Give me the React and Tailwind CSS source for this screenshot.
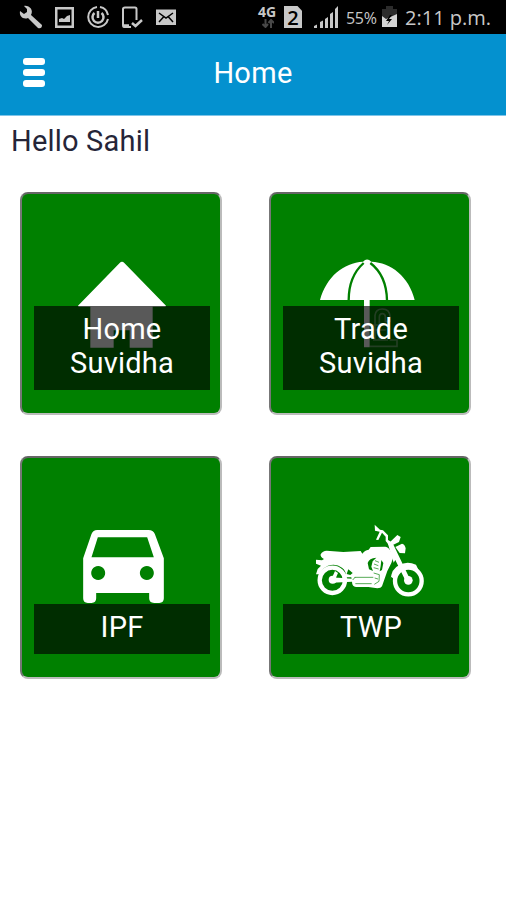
import React from "react";

function HouseIcon() {
  return (
    <svg className="block w-[88px] h-[87px] ml-[1px]" viewBox="203 64 264 261" fill="white">
      <path d="M328 70Q335 62 342 70L467 198Q467 201 464 201H427V324H358V272H310V324H240V201H206Q203 201 203 198Z" />
    </svg>
  );
}

function UmbrellaIcon() {
  return (
    <svg className="block w-[95px] h-[90px] -ml-[5px]" viewBox="181 57 285 270" fill="white">
      <path d="M181 180C200 110 252 68 310 65Q322 52 335 65C394 67 448 110 465 180H330V322H313V180Z" />
      <path d="M312 69C286 92 267 130 267 181M332 69C362 92 381 130 382 181" fill="none" stroke="#008000" strokeWidth="7" />
      <g fill="none" stroke="white" strokeOpacity=".4" strokeWidth="5">
        <path d="M330 319H412V300H390M346 300V226Q348 207 368 207Q390 207 391 230V244H377V230Q376 221 368 221Q359 221 359 232V300M340 255H378M340 270H378M340 300H385" />
      </g>
    </svg>
  );
}

function CarIcon() {
  return (
    <svg className="block w-[81px] h-[73px] ml-[4px]" viewBox="220 239 242 219" fill="white">
      <path
        fillRule="evenodd"
        d="M262 239H416Q430 239 435 251L462 324V444Q462 458 448 458H433Q418 458 418 444V428H259V444Q259 458 245 458H234Q220 458 220 444V324L245 251Q250 239 262 239ZM264 261L245 321H432L412 261ZM265 347a21 21 0 1 0 .1 0ZM411 347a21 21 0 1 0 .1 0Z"
      />
    </svg>
  );
}

function BikeIcon() {
  return (
    <svg className="block w-[110px] h-[75px]" viewBox="45 40 330 225" fill="white">
      {/* wheels */}
      <g fill="none" stroke="white">
        <circle cx="97" cy="212" r="38" strokeWidth="13" />
        <circle cx="325" cy="214" r="40" strokeWidth="13" />
      </g>
      <circle cx="98" cy="210" r="12" />
      <circle cx="325" cy="212" r="13" />
      {/* seat, tank and rear fender */}
      <path d="M62 134Q68 123 80 123L130 127L182 124L187 132Q194 121 206 120L212 112L256 111Q267 113 272 125L282 136L274 160L262 184L246 230Q243 236 232 236L205 232H168Q156 230 156 216L154 203H137Q140 184 126 174Q108 160 84 168Q64 177 60 194H48L53 178L63 168L48 162V150L66 152L72 148Q60 142 62 134Z" />
      {/* engine openings */}
      <g fill="#008000">
        <path d="M203 160Q207 145 229 144L218 155L214 171L219 184L207 179Z" />
        <path d="M145 179L158 190L151 196L140 193Z" />
        <path d="M244 151L250 160L246 181L239 185L242 169Z" />
      </g>
      <g fill="none" stroke="#008000" strokeWidth="2">
        <path d="M164 203H220M166 222H215M158 211L166 202M221 190L238 195L237 215L223 224M225 153L237 158M222 163L235 168M221 174L236 178M224 205L234 208" />
      </g>
      {/* swing arm and hub */}
      <path d="M95 203L156 207V216L96 219ZM94 209L105 184L114 190L104 213Z" />
      {/* fork and front fender */}
      <path d="M263 100L276 96L330 209L318 216L286 151L281 159Z" />
      <path d="M272 211Q274 177 297 167Q320 153 348 165L356 182Q328 169 306 178Q288 188 286 211L273 201Z" />
      {/* handlebar, mirror and lamps */}
      <path d="M224 45L240 60L249 62L264 77V91L279 100L270 110L257 94V81L246 69L235 91L228 90L239 66L225 63Z" />
      <path d="M271 96L292 76L302 82L297 97L280 105ZM286 112L306 102Q315 104 317 116L315 131L299 130Z" />
    </svg>
  );
}

function StatusIcons() {
  return (
    <svg className="block w-[180px] h-[34px]" viewBox="0 0 180 34" fill="#c8c8c8">
      {/* wrench */}
      <path d="M24 6C29 5 34 10 31 15L42 25Q42 29 38 28L28 18C23 20 19 16 20 11L24 14L27 12V9Z" />
      {/* picture */}
      <path fillRule="evenodd" d="M55 7H74V28H55ZM57.5 9.500V25.500H71.500V9.500ZM59 22V19L62 18L64 19L67 16L70 15V22Z" />
      {/* power ring */}
      <g fill="none" stroke="#c8c8c8" strokeWidth="2">
        <path d="M97 7A10 10 0 1 0 108 19M100 7A10 10 0 0 1 108 15" />
        <path strokeWidth="2.500" d="M94.500 13A5.500 5.500 0 1 0 101.500 13M98 11V18" />
      </g>
      {/* device check */}
      <g fill="none" stroke="#c8c8c8" strokeWidth="2">
        <path d="M131 27H124Q123 27 123 25V9Q123 7.500 125 7.500H135Q136.500 7.500 136.500 9V20" />
        <path strokeWidth="2.500" d="M123 25.500H129M132 23L135.500 26L142 20" />
      </g>
      {/* mail */}
      <path d="M156 9.500H176V25H156Z" />
      <path d="M159 13L166 18L173 13M159 22L163.500 17M173 22L168.500 17" fill="none" stroke="black" strokeWidth="1.500" />
    </svg>
  );
}

function StatusBar() {
  return (
    <div className="flex h-[34px] w-full items-start bg-black text-[#c8c8c8]">
      <StatusIcons />
      <div className="ml-[78px] w-[20px] pt-[4px]">
        <div className="font-['Open_Sans',sans-serif] text-[14px] leading-[15px] font-bold">4G</div>
        <svg className="ml-[4px] block w-3 h-[9px]" viewBox="0 0 12 9" fill="none" stroke="#484848" strokeWidth="2">
          <path d="M3.500 0V8M.500 5L3.500 8L6 5M9 9V1M6.500 4L9 1L12 4" />
        </svg>
      </div>
      <div className="ml-[6px] mt-[6px] h-[22px] w-[18px] bg-[#c8c8c8] [clip-path:polygon(0_0,75%_0,100%_22%,100%_100%,0_100%)] text-center font-['Open_Sans',sans-serif] text-[20px] leading-[23px] font-semibold text-black">
        2
      </div>
      <svg className="ml-3 mt-[6px] block w-[25px] h-[23px]" viewBox="0 0 25 23" fill="#c8c8c8">
        <path d="M0 20L3 18.500V22H0ZM6 16L9 14.500V22H6ZM11 13L14 11V22H11ZM16 8L19 6V22H16ZM21 3L24 0V22H21Z" />
      </svg>
      <div className="ml-[7px] mt-[8px] w-[31px] whitespace-nowrap font-['Open_Sans',sans-serif] text-[16px] leading-5 tracking-[-0.3px]">
        55%
      </div>
      <svg className="ml-[5px] mt-[6px] block w-[15px] h-[22px]" viewBox="0 0 15 22">
        <path d="M4 0H11V3H15V13H0V3H4Z" fill="#2c2c2c" />
        <path d="M0 10L4 13L15 8V21H0Z" fill="#d4d4d4" />
        <path d="M8 9L4 15H7L5 19L10 13H7L10 9Z" fill="black" />
      </svg>
      <div className="ml-[8px] mt-[6px] whitespace-nowrap font-['Open_Sans',sans-serif] text-[20px] leading-6">
        2:11 p.m.
      </div>
    </div>
  );
}

function Card({ label, top, children }) {
  return (
    <div
      className={`relative h-[223px] w-[202px] rounded-[8px] border-2 border-t-[#666] border-l-[#777] border-r-[#bbb] border-b-[#bbb] bg-[#008000] flex flex-col items-center ${top}`}
    >
      {children}
      <div className="absolute bottom-[23px] left-[12px] w-[176px] bg-black/65 px-6 pt-[6px] pb-[10px] text-center text-[29px] leading-[34px] tracking-[0.2px] text-white">
        {label}
      </div>
    </div>
  );
}

export default function App() {
  return (
    <div className="h-[900px] w-[506px] overflow-hidden bg-white font-['Roboto',sans-serif]">
      <StatusBar />
      <header className="relative flex h-[82px] items-center justify-center border-b border-[#7fc4e8] bg-[#0491cf] pb-[3px]">
        <button className="absolute left-[23px] top-[24px] flex flex-col gap-[4px]">
          <span className="block h-[7px] w-[22px] rounded-[3px] bg-white" />
          <span className="block h-[7px] w-[22px] rounded-[3px] bg-white" />
          <span className="block h-[7px] w-[22px] rounded-[3px] bg-white" />
        </button>
        <h1 className="text-[29px] leading-[34px] tracking-[0.3px] text-white">Home</h1>
      </header>

      <p className="h-[76px] pt-[8px] pl-[11px] text-[29px] leading-[34px] tracking-[0.2px] text-[#252538]">Hello Sahil</p>

      <main className="grid grid-cols-[202px_202px] gap-x-[47px] gap-y-[41px] pl-[20px]">
        <Card label="Home Suvidha" top="pt-[67px]">
          <HouseIcon />
        </Card>
        <Card label="Trade Suvidha" top="pt-[65px]">
          <UmbrellaIcon />
        </Card>
        <Card label="IPF" top="pt-[72px]">
          <CarIcon />
        </Card>
        <Card label="TWP" top="pt-[65px]">
          <BikeIcon />
        </Card>
      </main>
    </div>
  );
}
